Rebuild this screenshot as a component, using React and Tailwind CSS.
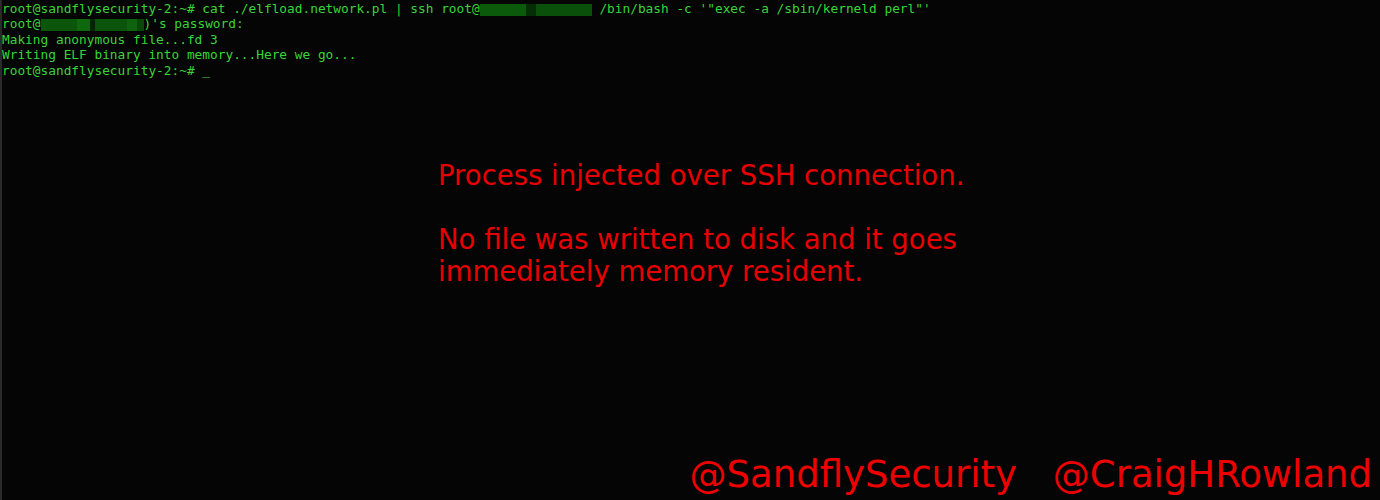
const termLines = [
  { type: "cmd1" },
  { type: "cmd2" },
  { type: "text", text: "Making anonymous file...fd 3" },
  { type: "text", text: "Writing ELF binary into memory...Here we go..." },
  { type: "prompt" },
];

const Redacted = ({ blocks }) => (
  <span className="inline-flex h-[12px] align-middle">
    {blocks.map((b, i) => (
      <span key={i} className={b.c} style={{ width: b.w }} />
    ))}
  </span>
);

const App = () => {
  return (
    <div className="w-[1380px] h-[500px] bg-[#050505] border-l-2 border-[#2a2a2a] flex flex-col overflow-hidden">
      <div className="pt-[1px] font-['DejaVu_Sans_Mono',monospace] text-[12.8px] leading-[15.4px] text-[#38d438] whitespace-pre">
        {termLines.map((line, i) => {
          if (line.type === "cmd1")
            return (
              <div key={i}>
                root@sandflysecurity-2:~# cat ./elfload.network.pl | ssh root@
                <Redacted
                  blocks={[
                    { w: 46, c: "bg-[#0b5a0b]" },
                    { w: 10, c: "bg-[#062e06]" },
                    { w: 56, c: "bg-[#0a500a]" },
                  ]}
                />
                {" /bin/bash -c '\"exec -a /sbin/kerneld perl\"'"}
              </div>
            );
          if (line.type === "cmd2")
            return (
              <div key={i}>
                root@
                <Redacted
                  blocks={[
                    { w: 36, c: "bg-[#0b560b]" },
                    { w: 13, c: "bg-[#0e680e]" },
                    { w: 5, c: "bg-[#042204]" },
                    { w: 32, c: "bg-[#0b540b]" },
                    { w: 10, c: "bg-[#0e640e]" },
                    { w: 7, c: "bg-[#0a480a]" },
                  ]}
                />
                )'s password:
              </div>
            );
          if (line.type === "prompt")
            return <div key={i}>root@sandflysecurity-2:~# _</div>;
          return <div key={i}>{line.text}</div>;
        })}
      </div>

      <div className="mt-[81px] pl-[436px] font-['DejaVu_Sans',sans-serif] text-[27.5px] leading-[32px] text-[#e80000]">
        <p>Process injected over SSH connection.</p>
        <p className="mt-[32px]">No file was written to disk and it goes</p>
        <p>immediately memory resident.</p>
      </div>

      <div className="mt-auto pb-[4px] pr-[8px] flex justify-end gap-[36px] font-['DejaVu_Sans',sans-serif] text-[37px] leading-[42px] text-[#ee0000]">
        <span>@SandflySecurity</span>
        <span>@CraigHRowland</span>
      </div>
    </div>
  );
};

export default App;
